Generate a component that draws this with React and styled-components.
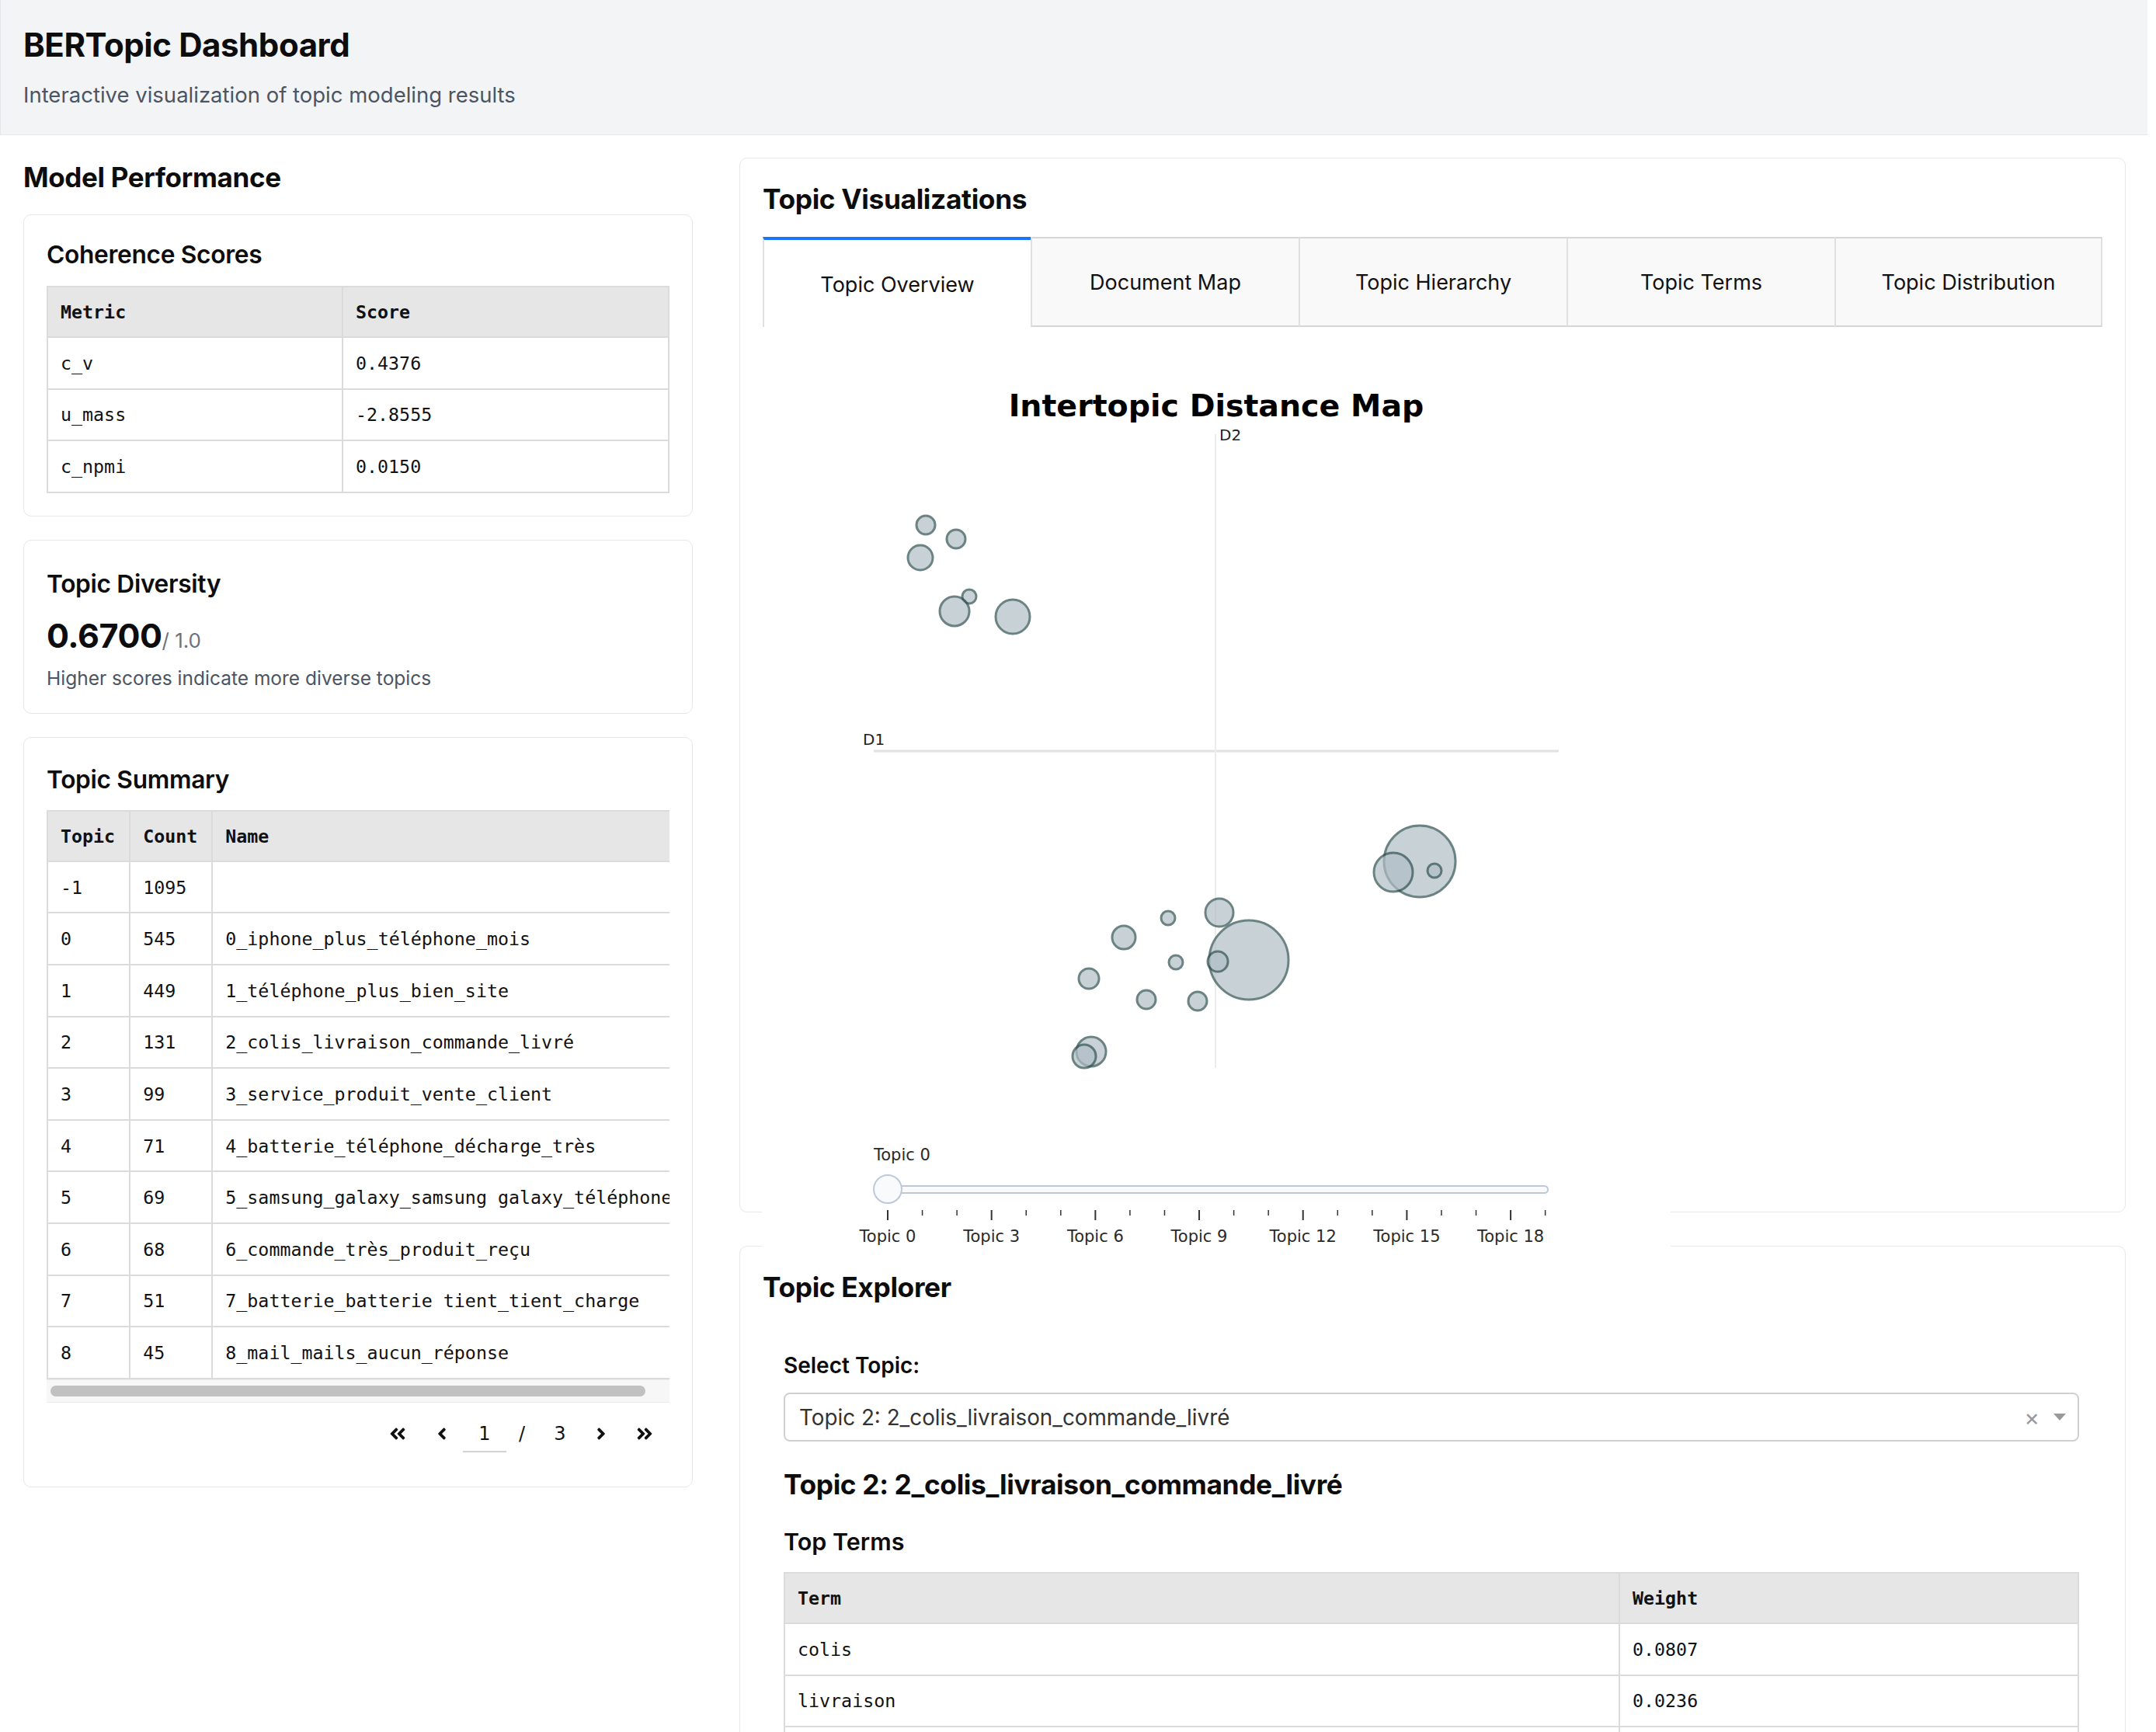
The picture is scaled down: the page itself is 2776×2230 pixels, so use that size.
import React from 'react';
import styled, { createGlobalStyle } from 'styled-components';
import { FaAngleDoubleLeft, FaAngleLeft, FaAngleRight, FaAngleDoubleRight } from 'react-icons/fa';

const GlobalStyle = createGlobalStyle`
  * { box-sizing: border-box; }
  body {
    margin: 0;
    background: #fff;
    font-family: Inter, "Noto Sans", sans-serif;
    color: #0d0d0d;
  }
`;

const Page = styled.div`
  width: 2765px;
`;

const Header = styled.header`
  height: 174px;
  padding: 34px 29px 0;
  background: #f3f4f6;
  border-bottom: 1px solid #e5e7eb;
  border-left: 1px solid #e5e7eb;
`;

const Title = styled.h1`
  margin: 0;
  font-size: 42px;
  line-height: 48px;
  font-weight: 700;
  letter-spacing: -0.01em;
`;

const Subtitle = styled.p`
  margin: 22px 0 0;
  font-size: 27.5px;
  line-height: 36px;
  color: #4b5563;
`;

const Main = styled.main`
  display: grid;
  grid-template-columns: 862px 1785px;
  column-gap: 60px;
  align-items: start;
  padding: 29px 28px 0 30px;
`;

const Column = styled.div`
  display: flex;
  flex-direction: column;
  gap: ${({ $gap }) => $gap || 30}px;
`;

const SectionTitle = styled.h2`
  margin: 3px 0 -4px;
  font-size: 35px;
  line-height: 44px;
  font-weight: 700;
  letter-spacing: -0.01em;
`;

const PanelTitle = styled(SectionTitle)`
  margin: 0 0 ${({ $mb }) => $mb ?? 24}px;
  line-height: 48px;
  font-size: 35.3px;
`;

const Card = styled.section`
  background: #fff;
  border: 1px solid #e5e7eb;
  border-radius: 10px;
  padding: ${({ $pad }) => $pad || '29px'};
`;

const CardTitle = styled.h3`
  margin: 0 0 ${({ $mb }) => $mb ?? 18}px;
  font-size: 31.7px;
  line-height: 44px;
  font-weight: 600;
  letter-spacing: -0.01em;
`;

const Table = styled.table`
  border-collapse: collapse;
  width: ${({ $full }) => ($full ? '100%' : 'auto')};
  font-family: "DejaVu Sans Mono", "Liberation Mono", monospace;
  font-size: 23.3px;
  color: #111;
`;

const Th = styled.th`
  height: 65px;
  padding: 0 18px 0 16px;
  text-align: left;
  font-weight: 700;
  white-space: nowrap;
  background: #e6e6e6;
  border: 2px solid #dbdbdb;
  width: ${({ $w }) => ($w ? `${$w}px` : 'auto')};
`;

const Td = styled.td`
  height: 66.6px;
  padding: 0 18px 0 16px;
  white-space: nowrap;
  border: 2px solid #dbdbdb;
`;

const ScrollBox = styled.div`
  overflow: hidden;
`;

const ScrollTrack = styled.div`
  height: 30px;
  padding: 7px 31px 7px 5px;
  background: #f7f7f7;
  border-top: 1px solid #ececec;
  border-bottom: 1px solid #ececec;
`;

const ScrollThumb = styled.div`
  height: 100%;
  border-radius: 8px;
  background: #c1c1c1;
`;

const Pager = styled.div`
  display: flex;
  justify-content: flex-end;
  align-items: center;
  height: 50px;
  margin-top: 15px;
  padding-right: 0;
  font-family: "DejaVu Sans", sans-serif;
  font-size: 24px;
  color: #111;
`;

const PageButton = styled.span`
  width: ${({ $w }) => $w || 54}px;
  display: flex;
  justify-content: center;
  align-items: center;
  font-size: 24px;
  color: #111;
`;

const PageInput = styled.span`
  width: 56px;
  height: 46px;
  display: flex;
  justify-content: center;
  align-items: center;
  border-bottom: 2px solid #d3d3d3;
  margin-top: 2px;
`;

const PageText = styled.span`
  width: ${({ $w }) => $w}px;
  text-align: center;
`;

const ScoreRow = styled.div`
  margin-top: 18px;
  height: 52px;
  display: flex;
  align-items: baseline;
  line-height: 52px;
`;

const Score = styled.span`
  font-size: 43px;
  font-weight: 700;
  letter-spacing: -0.01em;
`;

const ScoreMax = styled.span`
  font-size: 26px;
  color: #6b7280;
`;

const Hint = styled.p`
  margin: 12px 0 0;
  font-size: 24.5px;
  line-height: 34px;
  color: #4b5563;
`;

const TabList = styled.div`
  display: grid;
  grid-template-columns: repeat(5, 1fr);
  height: 116px;
`;

const Tab = styled.div`
  display: flex;
  align-items: center;
  justify-content: center;
  font-size: 27px;
  color: #111;
  background: ${({ $active }) => ($active ? '#fff' : '#f9f9f9')};
  border-left: 2px solid #e0e0e0;
  border-top: ${({ $active }) => ($active ? '4px solid #1975fa' : '2px solid #d6d6d6')};
  border-bottom: ${({ $active }) => ($active ? 'none' : '2px solid #d6d6d6')};
  padding-top: ${({ $active }) => ($active ? 2 : 0)}px;
  &:last-child { border-right: 2px solid #e0e0e0; }
`;

const TabPanel = styled.div`
  height: 1110px;
`;

const Graph = styled.div`
  position: relative;
  z-index: 1;
  width: 1170px;
  height: 1200px;
  margin-left: -1px;
  background: #fff;
`;

const ExplorerBody = styled.div`
  padding: 0 30px 0 27px;
`;

const FieldLabel = styled.div`
  margin-top: 56px;
  font-size: 28px;
  line-height: 40px;
  font-weight: 600;
`;

const Select = styled.div`
  margin-top: 15px;
  height: 63px;
  display: flex;
  align-items: center;
  padding: 0 14px 0 18px;
  border: 2px solid #d0d0d0;
  border-radius: 8px;
  font-size: 27.8px;
  color: #333;
`;

const SelectValue = styled.span`
  flex: 1;
`;

const ClearMark = styled.span`
  color: #999;
  font-size: 30px;
  margin-right: 18px;
`;

const Caret = styled.span`
  width: 0;
  height: 0;
  border-left: 8px solid transparent;
  border-right: 8px solid transparent;
  border-top: 9px solid #999;
  margin-right: 1px;
`;

const TopicHeading = styled.h3`
  margin: 34px 0 0;
  font-size: 35.3px;
  line-height: 44px;
  font-weight: 700;
  letter-spacing: -0.01em;
`;

const SubHeading = styled.h4`
  margin: 31px 0 19px;
  font-size: 30.5px;
  line-height: 40px;
  font-weight: 600;
`;

const coherence = [
  ['c_v', '0.4376'],
  ['u_mass', '-2.8555'],
  ['c_npmi', '0.0150'],
];

const topics = [
  ['-1', '1095', ''],
  ['0', '545', '0_iphone_plus_téléphone_mois'],
  ['1', '449', '1_téléphone_plus_bien_site'],
  ['2', '131', '2_colis_livraison_commande_livré'],
  ['3', '99', '3_service_produit_vente_client'],
  ['4', '71', '4_batterie_téléphone_décharge_très'],
  ['5', '69', '5_samsung_galaxy_samsung galaxy_téléphone'],
  ['6', '68', '6_commande_très_produit_reçu'],
  ['7', '51', '7_batterie_batterie tient_tient_charge'],
  ['8', '45', '8_mail_mails_aucun_réponse'],
];

const terms = [
  ['colis', '0.0807'],
  ['livraison', '0.0236'],
  ['commande', '0.0208'],
  ['livré', '0.0177'],
  ['reçu', '0.0151'],
];

const tabs = ['Topic Overview', 'Document Map', 'Topic Hierarchy', 'Topic Terms', 'Topic Distribution'];

// x, y, r in graph coordinates
const bubbles = [
  [211, 255, 12], [250, 273, 12], [204, 297, 16], [267, 347, 9], [248, 366, 19], [323, 373, 22],
  [847, 688, 46], [813, 702, 25], [866, 700, 9],
  [589, 754, 18], [523, 761, 9], [466, 786, 15], [627, 815, 51], [587, 817, 13], [533, 818, 9],
  [421, 839, 13], [495, 866, 12], [561, 868, 12], [424, 933, 19], [415, 939, 15],
];

const TICK_X0 = 162;
const TICK_STEP = 44.56;

const DistanceMap = () => (
  <svg width="1170" height="1200" viewBox="0 0 1170 1200">
    <rect width="1170" height="1200" fill="#fff" />
    <text x="585" y="101" textAnchor="middle" dominantBaseline="central"
      fontFamily="DejaVu Sans, sans-serif" fontWeight="700" fontSize="39.5" fill="#000">
      Intertopic Distance Map
    </text>
    <line x1="144" y1="546" x2="1026" y2="546" stroke="#e2e2e2" strokeWidth="3" />
    <line x1="584" y1="138" x2="584" y2="954" stroke="#ececec" strokeWidth="2" />
    <text x="589" y="139" dominantBaseline="central" fontFamily="DejaVu Sans, sans-serif" fontSize="20" fill="#222">D2</text>
    <text x="130" y="531" dominantBaseline="central" fontFamily="DejaVu Sans, sans-serif" fontSize="20" fill="#222">D1</text>
    {bubbles.map(([x, y, r], i) => (
      <circle key={i} cx={x} cy={y} r={r} fill="#B0BEC5" stroke="#2F4F4F" strokeWidth="3" opacity="0.7" />
    ))}
    <text x="144" y="1066" dominantBaseline="central" fontFamily="DejaVu Sans, sans-serif" fontSize="21" fill="#2a2a2a">Topic 0</text>
    <rect x="162" y="1106" width="850" height="9" rx="4.5" fill="#f8fafc" stroke="#bec8d9" strokeWidth="2" />
    <circle cx="162" cy="1110" r="18" fill="#f8fafc" stroke="#bec8d9" strokeWidth="2" />
    {Array.from({ length: 20 }, (_, i) => {
      const x = TICK_X0 + i * TICK_STEP;
      const major = i % 3 === 0;
      return (
        <g key={i}>
          <line x1={x} y1="1137" x2={x} y2={major ? 1150 : 1144} stroke="#333" strokeWidth={major ? 2 : 1.5} />
          {major && (
            <text x={x} y="1171" textAnchor="middle" dominantBaseline="central"
              fontFamily="DejaVu Sans, sans-serif" fontSize="21" fill="#2a2a2a">
              Topic {i}
            </text>
          )}
        </g>
      );
    })}
  </svg>
);

const App = () => (
  <Page>
    <GlobalStyle />
    <Header>
      <Title>BERTopic Dashboard</Title>
      <Subtitle>Interactive visualization of topic modeling results</Subtitle>
    </Header>
    <Main>
      <Column>
        <SectionTitle>Model Performance</SectionTitle>
        <Card>
          <CardTitle>Coherence Scores</CardTitle>
          <Table $full>
            <thead>
              <tr><Th $w={380}>Metric</Th><Th>Score</Th></tr>
            </thead>
            <tbody>
              {coherence.map(([m, s]) => (
                <tr key={m}><Td>{m}</Td><Td>{s}</Td></tr>
              ))}
            </tbody>
          </Table>
        </Card>
        <Card $pad="34px 29px 28px">
          <CardTitle $mb={0}>Topic Diversity</CardTitle>
          <ScoreRow>
            <Score>0.6700</Score>
            <ScoreMax>/ 1.0</ScoreMax>
          </ScoreRow>
          <Hint>Higher scores indicate more diverse topics</Hint>
        </Card>
        <Card $pad="32px 29px 43px">
          <CardTitle $mb={17}>Topic Summary</CardTitle>
          <ScrollBox>
            <Table>
              <thead>
                <tr><Th>Topic</Th><Th>Count</Th><Th>Name</Th></tr>
              </thead>
              <tbody>
                {topics.map(([t, c, n]) => (
                  <tr key={t}><Td>{t}</Td><Td>{c}</Td><Td>{n}</Td></tr>
                ))}
              </tbody>
            </Table>
          </ScrollBox>
          <ScrollTrack>
            <ScrollThumb />
          </ScrollTrack>
          <Pager>
            <PageButton $w={60}><FaAngleDoubleLeft /></PageButton>
            <PageButton><FaAngleLeft /></PageButton>
            <PageInput>1</PageInput>
            <PageText $w={40}>/</PageText>
            <PageText $w={58}>3</PageText>
            <PageButton $w={48}><FaAngleRight /></PageButton>
            <PageButton $w={64}><FaAngleDoubleRight /></PageButton>
          </Pager>
        </Card>
      </Column>

      <Column $gap={43}>
        <Card>
          <PanelTitle>Topic Visualizations</PanelTitle>
          <TabList>
            {tabs.map((t, i) => (
              <Tab key={t} $active={i === 0}>{t}</Tab>
            ))}
          </TabList>
          <TabPanel>
            <Graph>
              <DistanceMap />
            </Graph>
          </TabPanel>
        </Card>
        <Card>
          <PanelTitle $mb={0}>Topic Explorer</PanelTitle>
          <ExplorerBody>
            <FieldLabel>Select Topic:</FieldLabel>
            <Select>
              <SelectValue>Topic 2: 2_colis_livraison_commande_livré</SelectValue>
              <ClearMark>×</ClearMark>
              <Caret />
            </Select>
            <TopicHeading>Topic 2: 2_colis_livraison_commande_livré</TopicHeading>
            <SubHeading>Top Terms</SubHeading>
            <Table $full>
              <thead>
                <tr><Th $w={1075}>Term</Th><Th>Weight</Th></tr>
              </thead>
              <tbody>
                {terms.map(([t, w]) => (
                  <tr key={t}><Td>{t}</Td><Td>{w}</Td></tr>
                ))}
              </tbody>
            </Table>
          </ExplorerBody>
        </Card>
      </Column>
    </Main>
  </Page>
);

export default App;
